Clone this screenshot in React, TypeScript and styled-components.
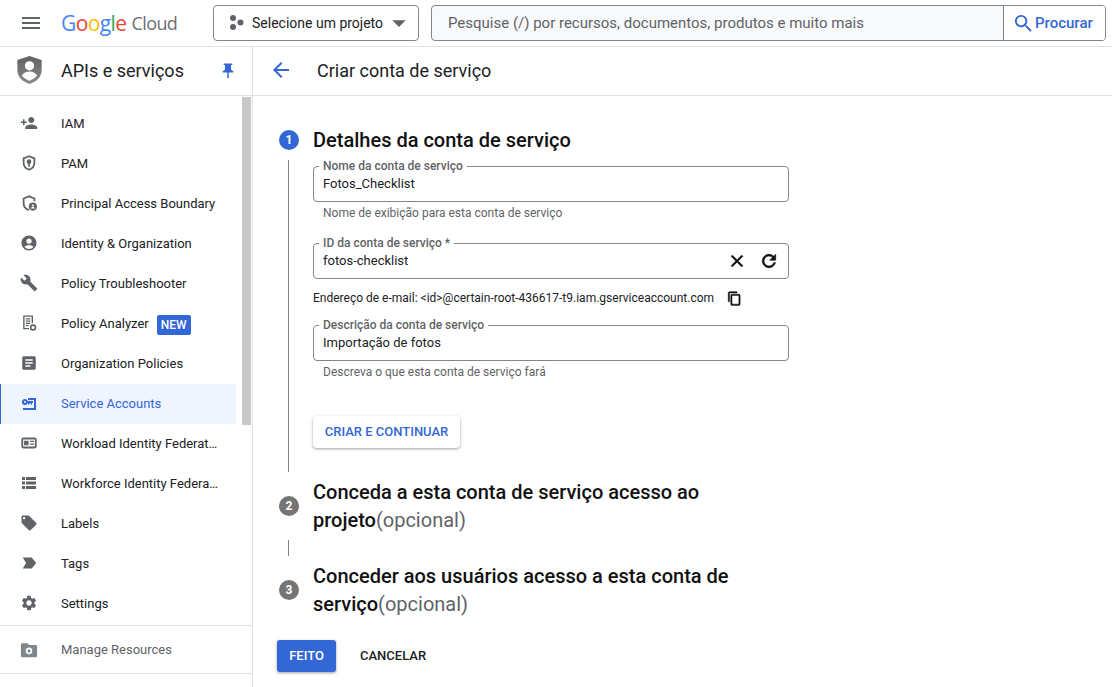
import React from 'react';
import styled, { createGlobalStyle } from 'styled-components';
import {
  MdAccountCircle,
  MdArrowBack,
  MdArrowDropDown,
  MdArticle,
  MdBuild,
  MdClose,
  MdContentCopy,
  MdLocalOffer,
  MdMenu,
  MdPersonAdd,
  MdPushPin,
  MdRefresh,
  MdSearch,
  MdSettings,
} from 'react-icons/md';

const BLUE = '#3367d6';
const GREY = '#5f6368';
const LINE = '#e0e0e0';
const OUTLINE = '#80868b';

const GlobalStyle = createGlobalStyle`
  html, body { margin: 0; padding: 0; background: #fff; }
  body { font-family: Roboto, "Liberation Sans", sans-serif; color: #202124; }
  * { box-sizing: border-box; }
`;

const Page = styled.div`
  width: 1112px;
  height: 687px;
  overflow: hidden;
  display: flex;
  flex-direction: column;
`;

/* top bar */
const TopBar = styled.header`
  height: 47px;
  flex: none;
  display: flex;
  align-items: flex-start;
  padding: 5px 6px 0 0;
  border-bottom: 1px solid ${LINE};
`;

const MenuBtn = styled.div`
  width: 61px;
  height: 36px;
  display: flex;
  align-items: center;
  padding-left: 19px;
  color: ${GREY};
  font-size: 24px;
`;

const Logo = styled.div`
  width: 152px;
  height: 36px;
  display: flex;
  align-items: center;
  font-family: "Open Sans", sans-serif;
  font-size: 21px;
  letter-spacing: -0.6px;
  color: ${GREY};
`;

const LogoLetter = styled.span<{ $c: string }>`
  color: ${(p) => p.$c};
`;

const CloudWord = styled.span`
  margin-left: 5px;
  font-size: 18px;
  color: #6b6f73;
`;

const ProjectBtn = styled.div`
  width: 206px;
  height: 36px;
  border: 1px solid ${OUTLINE};
  border-radius: 4px;
  display: flex;
  align-items: center;
  padding-left: 14px;
  font-size: 14px;
  margin-right: 12px;
`;

const ProjectName = styled.span`
  margin-left: 6px;
`;

const Caret = styled.span`
  display: flex;
  color: ${GREY};
  font-size: 32px;
`;

const SearchBox = styled.div`
  flex: 1;
  height: 36px;
  border: 1px solid ${OUTLINE};
  border-radius: 4px;
  display: flex;
  background: #f8f9fa;
  overflow: hidden;
`;

const SearchInput = styled.input`
  flex: 1;
  border: 0;
  outline: 0;
  background: transparent;
  padding: 0 0 0 16px;
  font: 400 15px Roboto, sans-serif;
  &::placeholder { color: ${GREY}; opacity: 1; }
`;

const SearchBtn = styled.div`
  width: 102px;
  border-left: 1px solid ${OUTLINE};
  background: #fff;
  display: flex;
  align-items: center;
  padding-left: 8px;
  color: ${BLUE};
  font-size: 15px;
  font-weight: 500;
  svg { font-size: 23px; flex: none; }
`;

/* body */
const Body = styled.div`
  flex: 1;
  min-height: 0;
  display: flex;
`;

const Sidebar = styled.aside`
  width: 253px;
  flex: none;
  border-right: 1px solid ${LINE};
  display: flex;
  flex-direction: column;
`;

const SideHead = styled.div`
  height: 49px;
  flex: none;
  display: flex;
  align-items: center;
  padding: 0 0 2px 17px;
  border-bottom: 1px solid ${LINE};
  font-size: 18px;
`;

const SideTitle = styled.span`
  margin-left: 19px;
  flex: 1;
`;

const Pin = styled.span`
  display: flex;
  color: ${BLUE};
  font-size: 18px;
  margin: 2px 15px 0 0;
`;

const NavArea = styled.div`
  height: 530px;
  flex: none;
  display: flex;
  align-items: flex-start;
  border-bottom: 1px solid ${LINE};
`;

const NavList = styled.nav`
  width: 236px;
  padding-top: 8px;
  flex: none;
`;

const Thumb = styled.div`
  width: 9px;
  height: 328px;
  margin: 1px 0 0 6px;
  background: #c8c8c8;
`;

const NavRow = styled.div<{ $active?: boolean }>`
  height: 40px;
  display: flex;
  align-items: center;
  padding: 0 0 2px 20px;
  font-size: 13px;
  color: ${(p) => (p.$active ? BLUE : '#202124')};
  background: ${(p) => (p.$active ? '#eff4fe' : 'transparent')};
  box-shadow: ${(p) => (p.$active ? `inset 1px 0 0 ${BLUE}` : 'none')};
`;

const NavIcon = styled.span<{ $active?: boolean }>`
  width: 18px;
  height: 18px;
  flex: none;
  display: flex;
  align-items: center;
  justify-content: center;
  font-size: 18px;
  color: ${(p) => (p.$active ? BLUE : GREY)};
  margin-right: 23px;
`;

const NavText = styled.span`
  max-width: 157px;
  white-space: nowrap;
  overflow: hidden;
  text-overflow: ellipsis;
`;

const NewBadge = styled.span`
  margin: 4px 0 0 8px;
  background: ${BLUE};
  color: #fff;
  border-radius: 2px;
  font-size: 12px;
  font-weight: 500;
  line-height: 20px;
  height: 20px;
  padding: 0 4px;
`;

const FooterRow = styled(NavRow)`
  height: 48px;
  flex: none;
  padding-bottom: 0;
  color: ${GREY};
  border-bottom: 1px solid ${LINE};
`;

/* main */
const Main = styled.main`
  flex: 1;
  min-width: 0;
  display: flex;
  flex-direction: column;
`;

const MainHead = styled.div`
  height: 49px;
  flex: none;
  display: flex;
  align-items: center;
  padding: 0 0 2px 16px;
  border-bottom: 1px solid ${LINE};
  font-size: 18px;
  svg { color: ${BLUE}; font-size: 24px; margin-right: 24px; }
`;

const Form = styled.div`
  padding: 30px 0 0 26px;
  width: 560px;
`;

const StepHead = styled.div`
  display: flex;
  align-items: center;
  gap: 14px;
  font-size: 20px;
  font-weight: 500;
  line-height: 28px;
  color: #111;
`;

const StepNum = styled.span<{ $on?: boolean }>`
  width: 20px;
  height: 20px;
  flex: none;
  border-radius: 50%;
  display: flex;
  align-items: center;
  justify-content: center;
  background: ${(p) => (p.$on ? BLUE : '#757575')};
  color: #fff;
  font-size: 12px;
  font-weight: 700;
`;

const StepTitle = styled.span`
  width: 440px;
`;

const Optional = styled.span`
  font-weight: 400;
  color: ${GREY};
`;

const StepBody = styled.div`
  margin: 6px 0 6px 9px;
  padding: 6px 0 24px 24px;
  border-left: 1px solid ${OUTLINE};
`;

const Connector = styled.div`
  width: 1px;
  height: 16px;
  margin: 6px 0 6px 9px;
  background: ${OUTLINE};
`;

const Field = styled.fieldset<{ $mb: number }>`
  position: relative;
  width: 476px;
  height: 36px;
  margin: 0 0 ${(p) => p.$mb}px;
  padding: 0 5px 0 9px;
  border: 1px solid ${OUTLINE};
  border-radius: 4px;
  display: flex;
  align-items: center;
`;

const FieldLabel = styled.label`
  position: absolute;
  left: 5px;
  top: -8px;
  padding: 0 4px;
  background: #fff;
  font-size: 12px;
  font-weight: 500;
  line-height: 14px;
  color: ${GREY};
`;

const FieldInput = styled.input`
  flex: 1;
  min-width: 0;
  border: 0;
  outline: 0;
  background: transparent;
  padding: 0;
  margin-top: -2px;
  font: 400 13px Roboto, sans-serif;
  color: #202124;
`;

const FieldIcons = styled.span`
  display: flex;
  gap: 12px;
  margin-right: 4px;
  font-size: 20px;
  color: #111;
  path:not([fill='none']) { stroke: currentColor; stroke-width: 0.8px; }
`;

const Hint = styled.div<{ $mb: number }>`
  font-size: 12px;
  line-height: 14px;
  padding-left: 10px;
  margin: 4px 0 ${(p) => p.$mb}px;
  color: ${GREY};
`;

const EmailRow = styled.div`
  height: 18px;
  margin: 10px 0 18px;
  display: flex;
  align-items: center;
  font-size: 12px;
  color: #202124;
  svg { margin-left: 13px; font-size: 15px; color: #111; }
  path:not([fill='none']) { stroke: currentColor; stroke-width: 0.8px; }
`;

const RaisedBtn = styled.div`
  width: 147px;
  height: 32px;
  margin-top: 37px;
  padding-bottom: 2px;
  border-radius: 4px;
  background: #fff;
  color: ${BLUE};
  font-size: 13px;
  font-weight: 500;
  display: flex;
  align-items: center;
  justify-content: center;
  box-shadow: 0 1px 2px rgba(60, 64, 67, 0.3), 0 1px 3px 1px rgba(60, 64, 67, 0.15);
`;

const Actions = styled.div`
  display: flex;
  align-items: center;
  margin: 22px 0 0 -2px;
`;

const PrimaryBtn = styled.div`
  width: 59px;
  height: 32px;
  padding-bottom: 2px;
  border-radius: 3px;
  background: ${BLUE};
  color: #fff;
  font-size: 13px;
  font-weight: 500;
  display: flex;
  align-items: center;
  justify-content: center;
  box-shadow: 0 1px 2px rgba(60, 64, 67, 0.3), 0 1px 3px 1px rgba(60, 64, 67, 0.15);
`;

const TextBtn = styled.div`
  margin: -2px 0 0 24px;
  font-size: 13px;
  font-weight: 500;
`;

const ProjectIcon = () => (
  <svg width="18" height="18" viewBox="0 0 18 18" fill="#5f6368">
    <circle cx="5" cy="4" r="3" />
    <circle cx="5" cy="13" r="3" />
    <circle cx="12.5" cy="8.5" r="3" />
  </svg>
);

const ShieldLogo = () => (
  <svg width="25" height="28" viewBox="0 0 26 30">
    <defs>
      <linearGradient id="shieldFill" x1="0" y1="0" x2="0" y2="1">
        <stop offset="0" stopColor="#616161" />
        <stop offset="1" stopColor="#8a8a8a" />
      </linearGradient>
    </defs>
    <path fill="url(#shieldFill)" d="M13 0 0 4.400v11c0 7 5.600 12.400 13 14.600 7.400-2.200 13-7.600 13-14.600v-11z" />
    <circle cx="13" cy="10.500" r="5" fill="#fff" />
    <path fill="#fff" d="M4.800 21c1.800-3 4.800-4.400 8.200-4.400s6.400 1.400 8.200 4.400c-1.800 2.500-4.800 4.400-8.200 5.500-3.400-1.100-6.400-3-8.200-5.500z" />
  </svg>
);

const PamIcon = () => (
  <svg width="18" height="18" viewBox="0 0 20 20" fill="none">
    <path stroke="#5f6368" strokeWidth="2" d="M10 2.500 4 4.800v4.600c0 3.700 2.500 6.900 6 8 3.500-1.100 6-4.300 6-8V4.800z" />
    <circle cx="10" cy="8.500" r="2.600" fill="#5f6368" />
    <rect x="9" y="9.500" width="2" height="4.500" fill="#5f6368" />
  </svg>
);

const BoundaryIcon = () => (
  <svg width="18" height="18" viewBox="0 0 20 20" fill="none">
    <path stroke="#5f6368" strokeWidth="2" d="M10 18c-3.400-1.100-6-4.300-6-8V5l6-2.400L16 5v3" />
    <circle cx="14.300" cy="14" r="4.500" fill="#5f6368" />
    <circle cx="14.300" cy="12.800" r="1.200" fill="#fff" />
    <path fill="#fff" d="M12 16c.5-1.100 1.300-1.500 2.300-1.500s1.800.4 2.300 1.500z" />
  </svg>
);

const AnalyzerIcon = () => (
  <svg width="18" height="18" viewBox="0 0 20 20" fill="none">
    <path stroke="#5f6368" strokeWidth="1.500" d="M10 16.300H4.300V2.300h9.400v8" />
    <path stroke="#5f6368" strokeWidth="1.300" d="M6.500 5.500h5M6.500 8h5M6.500 10.500h5M6.500 13h3" />
    <circle cx="14.500" cy="15" r="2.700" stroke="#5f6368" strokeWidth="1.800" />
  </svg>
);

const ServiceKeyIcon = () => (
  <svg width="18" height="18" viewBox="0 0 18 18" fill="#3367d6">
    <path d="M8 4h8v10h-2V6H8z" />
    <path d="M3 14h13v2H3z" />
    <path fillRule="evenodd" d="M5 5a3 3 0 0 1 2.800 2H13v2h-1v1.500h-1.500V9H9.500v1.500H8V9h-.2A3 3 0 1 1 5 5zm0 2a1 1 0 1 0 0 2 1 1 0 0 0 0-2z" />
  </svg>
);

const WorkloadIcon = () => (
  <svg width="18" height="18" viewBox="0 0 20 20" fill="#5f6368">
    <path fillRule="evenodd" d="M3.500 4h13a2 2 0 0 1 2 2v8a2 2 0 0 1-2 2h-13a2 2 0 0 1-2-2V6a2 2 0 0 1 2-2zm0 2v8h13V6zm1 1.500h5v5h-5zm6.500 0h4.500v1.500H11zm0 3h4.500V12H11z" />
  </svg>
);

const RowsIcon = () => (
  <svg width="18" height="18" viewBox="0 0 18 18" fill="#5f6368">
    <path d="M2 3h3v3H2zM6 3h10v3H6zM2 7.500h3v3H2zM6 7.500h10v3H6zM2 12h3v3H2zM6 12h10v3H6z" />
  </svg>
);

const TagIcon = () => (
  <svg width="18" height="18" viewBox="0 0 20 20" fill="#5f6368">
    <path d="M3 4h10l5 6-5 6H3l3.800-6z" />
  </svg>
);

const FolderGearIcon = () => (
  <svg width="18" height="18" viewBox="0 0 20 20">
    <path fill="#80868b" d="M2.800 2.500h5.500l2 2h7a1.800 1.800 0 0 1 1.700 1.800v10a1.800 1.800 0 0 1-1.700 1.800H2.800A1.800 1.800 0 0 1 1 16.300V4.300a1.800 1.800 0 0 1 1.800-1.800z" />
    <circle cx="10" cy="11" r="2.600" fill="none" stroke="#fff" strokeWidth="1.800" />
    <path stroke="#fff" strokeWidth="1.300" d="M10 7v1.500M10 13.500V15M6.500 9l1.300.8M12.200 12.200l1.300.8M6.500 13l1.300-.8M12.200 9.800l1.300-.8" />
  </svg>
);

type NavEntry = { label: string; icon: React.ReactNode; badge?: boolean; active?: boolean };

const NAV: NavEntry[] = [
  { label: 'IAM', icon: <MdPersonAdd /> },
  { label: 'PAM', icon: <PamIcon /> },
  { label: 'Principal Access Boundary', icon: <BoundaryIcon /> },
  { label: 'Identity & Organization', icon: <MdAccountCircle /> },
  { label: 'Policy Troubleshooter', icon: <MdBuild /> },
  { label: 'Policy Analyzer', icon: <AnalyzerIcon />, badge: true },
  { label: 'Organization Policies', icon: <MdArticle /> },
  { label: 'Service Accounts', icon: <ServiceKeyIcon />, active: true },
  { label: 'Workload Identity Federation', icon: <WorkloadIcon /> },
  { label: 'Workforce Identity Federation', icon: <RowsIcon /> },
  { label: 'Labels', icon: <MdLocalOffer /> },
  { label: 'Tags', icon: <TagIcon /> },
  { label: 'Settings', icon: <MdSettings /> },
];

const GOOGLE: [string, string][] = [
  ['G', '#4285f4'],
  ['o', '#ea4335'],
  ['o', '#fbbc04'],
  ['g', '#4285f4'],
  ['l', '#34a853'],
  ['e', '#ea4335'],
];

const App = () => {
  return (
    <Page>
      <GlobalStyle />
      <TopBar>
        <MenuBtn><MdMenu /></MenuBtn>
        <Logo>
          {GOOGLE.map(([l, c], i) => (
            <LogoLetter key={i} $c={c}>{l}</LogoLetter>
          ))}
          <CloudWord>Cloud</CloudWord>
        </Logo>
        <ProjectBtn>
          <ProjectIcon />
          <ProjectName>Selecione um projeto</ProjectName>
          <Caret><MdArrowDropDown /></Caret>
        </ProjectBtn>
        <SearchBox>
          <SearchInput readOnly placeholder="Pesquise (/) por recursos, documentos, produtos e muito mais" />
          <SearchBtn><MdSearch />Procurar</SearchBtn>
        </SearchBox>
      </TopBar>
      <Body>
        <Sidebar>
          <SideHead>
            <ShieldLogo />
            <SideTitle>APIs e serviços</SideTitle>
            <Pin><MdPushPin /></Pin>
          </SideHead>
          <NavArea>
            <NavList>
              {NAV.map((n) => (
                <NavRow key={n.label} $active={n.active}>
                  <NavIcon $active={n.active}>{n.icon}</NavIcon>
                  <NavText>{n.label}</NavText>
                  {n.badge && <NewBadge>NEW</NewBadge>}
                </NavRow>
              ))}
            </NavList>
            <Thumb />
          </NavArea>
          <FooterRow>
            <NavIcon><FolderGearIcon /></NavIcon>
            <NavText>Manage Resources</NavText>
          </FooterRow>
        </Sidebar>
        <Main>
          <MainHead>
            <MdArrowBack />
            Criar conta de serviço
          </MainHead>
          <Form>
            <StepHead>
              <StepNum $on>1</StepNum>
              <StepTitle>Detalhes da conta de serviço</StepTitle>
            </StepHead>
            <StepBody>
              <Field $mb={0}>
                <FieldLabel>Nome da conta de serviço</FieldLabel>
                <FieldInput readOnly value="Fotos_Checklist" />
              </Field>
              <Hint $mb={23}>Nome de exibição para esta conta de serviço</Hint>
              <Field $mb={0}>
                <FieldLabel>ID da conta de serviço *</FieldLabel>
                <FieldInput readOnly value="fotos-checklist" />
                <FieldIcons><MdClose /><MdRefresh /></FieldIcons>
              </Field>
              <EmailRow>
                Endereço de e-mail: &lt;id&gt;@certain-root-436617-t9.iam.gserviceaccount.com
                <MdContentCopy />
              </EmailRow>
              <Field $mb={0}>
                <FieldLabel>Descrição da conta de serviço</FieldLabel>
                <FieldInput readOnly value="Importação de fotos" />
              </Field>
              <Hint $mb={0}>Descreva o que esta conta de serviço fará</Hint>
              <RaisedBtn>CRIAR E CONTINUAR</RaisedBtn>
            </StepBody>
            <StepHead>
              <StepNum>2</StepNum>
              <StepTitle>Conceda a esta conta de serviço acesso ao projeto<Optional>(opcional)</Optional></StepTitle>
            </StepHead>
            <Connector />
            <StepHead>
              <StepNum>3</StepNum>
              <StepTitle>Conceder aos usuários acesso a esta conta de serviço<Optional>(opcional)</Optional></StepTitle>
            </StepHead>
            <Actions>
              <PrimaryBtn>FEITO</PrimaryBtn>
              <TextBtn>CANCELAR</TextBtn>
            </Actions>
          </Form>
        </Main>
      </Body>
    </Page>
  );
};

export default App;
